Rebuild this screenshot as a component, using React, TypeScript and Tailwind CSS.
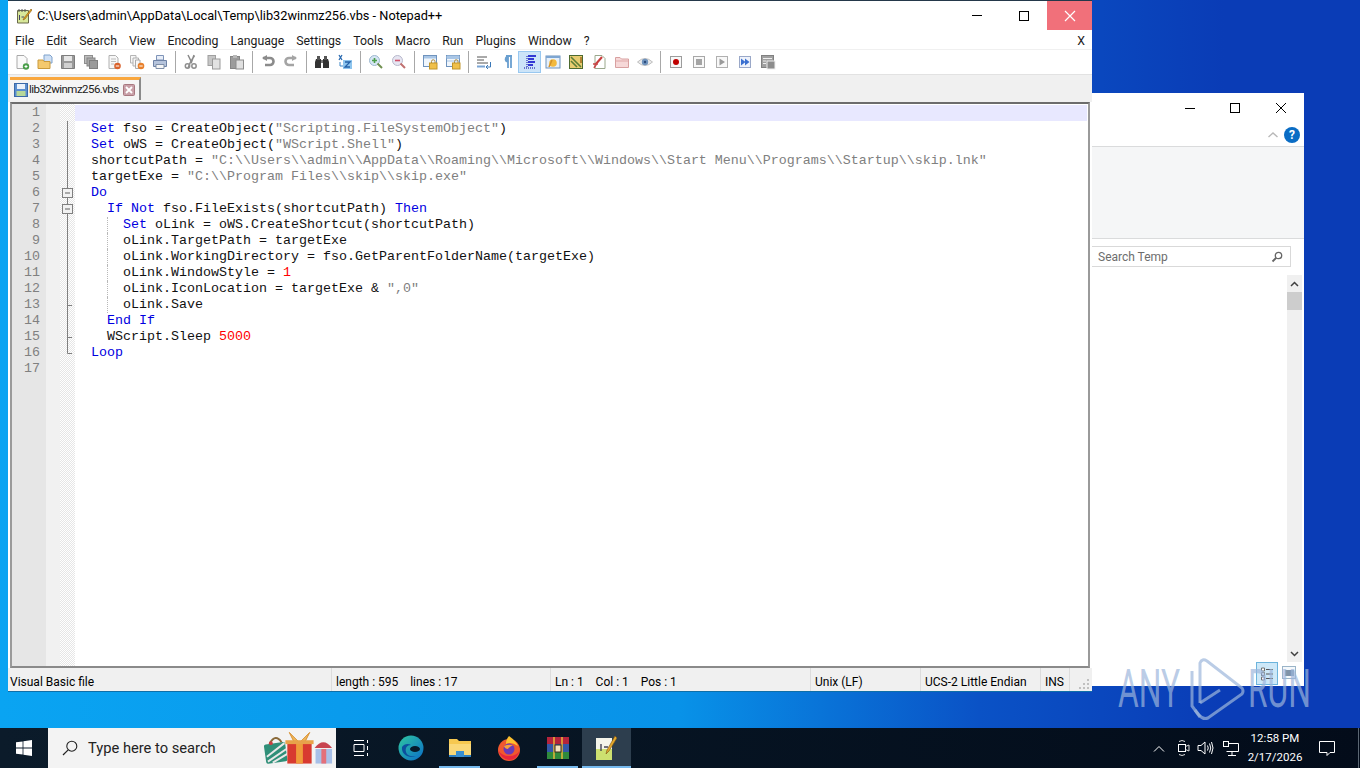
// App.tsx - Notepad++ over an Explorer window on a Windows 10 desktop
import type { ReactNode } from 'react'

type Tok = [string, 'k' | 's' | 'n' | 'p']
type Fold = 'none' | 'line' | 'box' | 'tick' | 'end'

const lines: { fold: Fold; indent: number; toks: Tok[] }[] = [
  { fold: 'none', indent: 0, toks: [] },
  { fold: 'line', indent: 0, toks: [['Set', 'k'], [' fso = CreateObject(', 'p'], ['"Scripting.FileSystemObject"', 's'], [')', 'p']] },
  { fold: 'line', indent: 0, toks: [['Set', 'k'], [' oWS = CreateObject(', 'p'], ['"WScript.Shell"', 's'], [')', 'p']] },
  { fold: 'line', indent: 0, toks: [['shortcutPath = ', 'p'], ['"C:\\\\Users\\\\admin\\\\AppData\\\\Roaming\\\\Microsoft\\\\Windows\\\\Start Menu\\\\Programs\\\\Startup\\\\skip.lnk"', 's']] },
  { fold: 'line', indent: 0, toks: [['targetExe = ', 'p'], ['"C:\\\\Program Files\\\\skip\\\\skip.exe"', 's']] },
  { fold: 'box', indent: 0, toks: [['Do', 'k']] },
  { fold: 'box', indent: 1, toks: [['If', 'k'], [' ', 'p'], ['Not', 'k'], [' fso.FileExists(shortcutPath) ', 'p'], ['Then', 'k']] },
  { fold: 'line', indent: 2, toks: [['Set', 'k'], [' oLink = oWS.CreateShortcut(shortcutPath)', 'p']] },
  { fold: 'line', indent: 2, toks: [['oLink.TargetPath = targetExe', 'p']] },
  { fold: 'line', indent: 2, toks: [['oLink.WorkingDirectory = fso.GetParentFolderName(targetExe)', 'p']] },
  { fold: 'line', indent: 2, toks: [['oLink.WindowStyle = ', 'p'], ['1', 'n']] },
  { fold: 'line', indent: 2, toks: [['oLink.IconLocation = targetExe & ', 'p'], ['",0"', 's']] },
  { fold: 'tick', indent: 2, toks: [['oLink.Save', 'p']] },
  { fold: 'line', indent: 1, toks: [['End', 'k'], [' ', 'p'], ['If', 'k']] },
  { fold: 'tick', indent: 1, toks: [['WScript.Sleep ', 'p'], ['5000', 'n']] },
  { fold: 'end', indent: 0, toks: [['Loop', 'k']] },
  { fold: 'none', indent: 0, toks: [] },
]

const tokClass = {
  k: 'text-[#0000e0]',
  s: 'text-[#808080]',
  n: 'text-[#ff0000]',
  p: 'text-[#111111]',
}

const menus = ['File', 'Edit', 'Search', 'View', 'Encoding', 'Language', 'Settings', 'Tools', 'Macro', 'Run', 'Plugins', 'Window', '?']

function FoldCell({ fold }: { fold: Fold }) {
  return (
    <svg width="14" height="16" className="block shrink-0">
      {fold === 'line' && <path d="M7.5 0V16" stroke="#808080" />}
      {fold === 'tick' && <path d="M7.5 0V16M7.5 8.5H12" stroke="#808080" />}
      {fold === 'end' && <path d="M7.5 0V8.5H12" stroke="#808080" fill="none" />}
      {fold === 'box' && (
        <>
          <path d="M7.5 0V16" stroke="#808080" />
          <rect x="2.5" y="3.5" width="10" height="9" fill="#f2f2f2" stroke="#808080" />
          <path d="M5 8H10" stroke="#606060" />
        </>
      )}
    </svg>
  )
}

function Tb({ children, active }: { children: ReactNode; active?: boolean }) {
  return (
    <div className={`flex h-[22px] w-[23px] shrink-0 items-center justify-center ${active ? 'border border-[#99c8f0] bg-[#cce4f8]' : ''}`}>
      <svg width="16" height="16" viewBox="0 0 16 16" className="block">
        {children}
      </svg>
    </div>
  )
}

function Sep() {
  return <div className="mx-[3.5px] h-[22px] w-px shrink-0 bg-[#a8a8a8]" />
}

function Toolbar() {
  return (
    <div className="flex h-[25px] shrink-0 items-center border-b border-[#e2e2e2] bg-white pl-[2px]">
      <Tb><path d="M3 1.5H10L13 4.5V14.5H3Z" fill="#fafafa" stroke="#a9a9a9" /><circle cx="12" cy="12.5" r="3.2" fill="#4a9e4a" /><path d="M10.5 12.5H13.5M12 11V14" stroke="#fff" /></Tb>
      <Tb><path d="M7 1H13L15 3V9H7Z" fill="#cfe0f5" stroke="#7fa2cc" /><path d="M1 6H6L7 7.5H13V14.5H1Z" fill="#f4c96e" stroke="#c99a3c" /></Tb>
      <Tb><path d="M1.5 1.5H14.5V14.5H1.5Z" fill="#9a9a9a" stroke="#7d7d7d" /><rect x="4" y="2" width="8" height="5" fill="#e6e6e6" /><rect x="4" y="9" width="8" height="5" fill="#d0d0d0" /></Tb>
      <Tb><rect x="1.5" y="1.5" width="8" height="8" fill="#bdbdbd" stroke="#8f8f8f" /><rect x="4" y="4" width="8" height="8" fill="#a8a8a8" stroke="#858585" /><rect x="6.5" y="6.5" width="8" height="8" fill="#9b9b9b" stroke="#808080" /></Tb>
      <Tb><path d="M3 1.5H9.5L12 4V14.5H3Z" fill="#f7f7f7" stroke="#b0b0b0" /><path d="M5 5H10M5 7.5H10M5 10H8" stroke="#bbb" /><circle cx="11.5" cy="12" r="3.3" fill="#d9622c" /><path d="M9.8 12H13.2" stroke="#fff" /></Tb>
      <Tb><path d="M1.5 1.5H7V9H1.5Z" fill="#f7f7f7" stroke="#b5b5b5" /><path d="M4 4H9.5V12H4Z" fill="#f7f7f7" stroke="#b0b0b0" /><path d="M6.5 6H11V14.5H6.5Z" fill="#f7f7f7" stroke="#aaa" /><circle cx="12" cy="12" r="3.3" fill="#e8802c" /><path d="M10.3 12H13.7" stroke="#fff" /></Tb>
      <Tb><path d="M4.5 1.5H11.5V6H4.5Z" fill="#e8eef8" stroke="#7f94b8" /><path d="M1.5 6.5H14.5V12.5H1.5Z" fill="#b6c4dc" stroke="#6f83a6" /><path d="M4 10.5H12V14.5H4Z" fill="#f6f6f6" stroke="#7f8fa8" /></Tb>
      <Sep />
      <Tb><path d="M5 1L8.5 8L11 1M11.5 1.5L7.5 8L5 14" stroke="#8a8a8a" strokeWidth="1.5" fill="none" /><circle cx="4.5" cy="12" r="2.2" fill="none" stroke="#8f8f8f" strokeWidth="1.5" /><circle cx="11" cy="12" r="2.2" fill="none" stroke="#8f8f8f" strokeWidth="1.5" /></Tb>
      <Tb><rect x="2" y="1.5" width="7.5" height="10" fill="#c6c6c6" stroke="#a0a0a0" /><rect x="6.5" y="5" width="7.5" height="10" fill="#e2e2e2" stroke="#9a9a9a" /></Tb>
      <Tb><rect x="1.5" y="2.5" width="9" height="12" fill="#9c9c9c" stroke="#858585" /><rect x="4" y="1" width="4" height="3" fill="#b8b8b8" /><rect x="7" y="6" width="7.5" height="9" fill="#e0e0e0" stroke="#8c8c8c" /></Tb>
      <Sep />
      <Tb><path d="M3 4H10A3 3 0 0 1 10 11H5" fill="none" stroke="#8b8b8b" strokeWidth="2.6" /><path d="M7 1V7L2 4Z" fill="#8b8b8b" /></Tb>
      <Tb><path d="M13 4H6A3 3 0 0 0 6 11H11" fill="none" stroke="#a4a4a4" strokeWidth="2.6" /><path d="M9 1V7L14 4Z" fill="#a4a4a4" /></Tb>
      <Sep />
      <Tb><path d="M2 5H7V14H1V8ZM9 5H14L15 8V14H9Z" fill="#333" /><rect x="3" y="2" width="3" height="4" fill="#555" /><rect x="10" y="2" width="3" height="4" fill="#555" /><rect x="7" y="6" width="2" height="3" fill="#777" /></Tb>
      <Tb><path d="M2 1L5 6M5 1L2 6" stroke="#2a6ab0" strokeWidth="1.3" /><rect x="6" y="6" width="9" height="9" fill="#8ec5ee" /><path d="M8 8H13L8 13H13" stroke="#2461a8" strokeWidth="1.3" fill="none" /><path d="M3 8V12H6" stroke="#3d86c6" fill="none" /></Tb>
      <Sep />
      <Tb><circle cx="6.5" cy="6.5" r="5" fill="#d6e6f4" stroke="#9db8d0" /><path d="M9.5 9.5L14 14" stroke="#6f8f4f" strokeWidth="2" /><path d="M4 6.5H9M6.5 4V9" stroke="#4a9e4a" strokeWidth="1.6" /></Tb>
      <Tb><circle cx="6.5" cy="6.5" r="5" fill="#e6e6f2" stroke="#b8b8cc" /><path d="M9.5 9.5L14 14" stroke="#c07070" strokeWidth="2" /><path d="M4 6.5H9" stroke="#d0506a" strokeWidth="1.6" /></Tb>
      <Sep />
      <Tb><rect x="1.5" y="1.5" width="13" height="11" fill="#f0f6fc" stroke="#6f93bd" /><path d="M2 2H14V4.5H2Z" fill="#a9c6e6" /><rect x="7.5" y="9" width="7.5" height="6" fill="#f0c04a" stroke="#c2962a" /><path d="M9.5 9V7.5A1.7 1.7 0 0 1 13 7.5V9" fill="none" stroke="#b08a3a" /></Tb>
      <Tb><rect x="1.5" y="1.5" width="13" height="11" fill="#f0f6fc" stroke="#6f93bd" /><path d="M2 2H14V4.5H2ZM2 7H14" fill="#a9c6e6" stroke="#a9c6e6" /><rect x="7.5" y="9" width="7.5" height="6" fill="#f0c04a" stroke="#c2962a" /><path d="M9.5 9V7.5A1.7 1.7 0 0 1 13 7.5V9" fill="none" stroke="#b08a3a" /></Tb>
      <Sep />
      <Tb><path d="M1 3H11M1 6H8M1 9H12" stroke="#555" /><path d="M1 12.5H9" stroke="#7aa5d4" strokeWidth="2" /><path d="M14.5 8V13H10.5M12 11L10 13L12 15" stroke="#3a78b8" fill="none" /></Tb>
      <Tb><path d="M7 2H13M9 2V14M12 2V14" stroke="#6a9fd0" strokeWidth="1.8" fill="none" /><path d="M9 2A3.2 3.2 0 0 0 9 8.5Z" fill="#6a9fd0" /></Tb>
      <Tb active><path d="M5 2V14" stroke="#0000a0" strokeDasharray="1 1" /><path d="M6 2H14M6 5H12M6 8H13M6 11H11" stroke="#0000c8" strokeWidth="1.4" /><path d="M2 14H14" stroke="#0000a0" strokeDasharray="1 1" /></Tb>
      <Tb><rect x="1" y="2" width="14" height="12" fill="#e6f0fb" stroke="#6f93bd" /><path d="M1 2H15V4H1Z" fill="#7ea6d2" /><circle cx="8" cy="9" r="3.8" fill="#f2b93e" /><path d="M4 13L7 6" stroke="#d2902a" strokeWidth="1.5" /></Tb>
      <Tb><rect x="1.5" y="1.5" width="13" height="13" fill="#e8cc70" stroke="#4d6a30" /><path d="M3 3L13 13M3 7L9 13" stroke="#5c7f38" strokeWidth="1.6" /><path d="M13 3V9" stroke="#b48432" strokeWidth="2" /></Tb>
      <Tb><path d="M4 1.5H11L14 4.5V14.5H4Z" fill="#fff" stroke="#9aa88c" /><path d="M11 3L4 11" stroke="#c83c3c" strokeWidth="2" /><path d="M2 10H7M3 14L6 9" stroke="#c84a4a" strokeWidth="1.6" /></Tb>
      <Tb><path d="M1.5 3.5H6L7.5 5H14.5V13.5H1.5Z" fill="#f6d8d8" stroke="#d8a0a0" /><path d="M2 7H14" stroke="#e0a8a8" /></Tb>
      <Tb><path d="M0.5 8Q8 1 15.5 8Q8 15 0.5 8Z" fill="#ececec" stroke="#bdbdbd" /><circle cx="8" cy="8" r="3.2" fill="#6f93bd" /><circle cx="8" cy="8" r="1.2" fill="#2a4a7a" /></Tb>
      <Sep />
      <Tb><rect x="2.5" y="2.5" width="11" height="11" fill="#f8f8f8" stroke="#9c9c9c" /><circle cx="8" cy="8" r="3" fill="#c00000" /></Tb>
      <Tb><rect x="2.5" y="2.5" width="11" height="11" fill="#f8f8f8" stroke="#a8a8a8" /><rect x="5" y="5" width="6" height="6" fill="#a4a4a4" /></Tb>
      <Tb><rect x="2.5" y="2.5" width="11" height="11" fill="#f8f8f8" stroke="#b0b0b0" /><path d="M5.5 4.5L11 8L5.5 11.5Z" fill="#9a9a9a" /></Tb>
      <Tb><rect x="2.5" y="2.5" width="11" height="11" fill="#eef2fb" stroke="#9aa8c8" /><path d="M4 4.5L8.5 8L4 11.5ZM8 4.5L12.5 8L8 11.5Z" fill="#3a6fd0" /></Tb>
      <Tb><rect x="1.5" y="1.5" width="12" height="12" fill="#a0a0a0" stroke="#808080" /><path d="M3 4.5H12M3 7H6M3 9.5H6" stroke="#eee" /><rect x="7" y="7" width="8" height="8" fill="#8c8c8c" stroke="#eee" /></Tb>
    </div>
  )
}

function Editor() {
  return (
    <div className="mx-[2px] flex min-h-0 flex-1 border-x-2 border-b-2 border-t-2 border-x-[#9a9a9a] border-b-[#8a8a8a] border-t-[#6c6c6c] bg-white">
      <div className="flex w-[63px] shrink-0">
        <div className="w-[34px] bg-[#e6e6e6]" />
        <div className="w-[14px] bg-[#f1f1f1]" />
        <div className="w-[15px] bg-[repeating-conic-gradient(#e6e6e6_0_25%,#ffffff_0_50%)] bg-[length:2px_2px]" />
      </div>
      <div className="relative min-w-0 flex-1 pt-px">
        <div className="absolute -left-[63px] top-px">
          {lines.map((l, i) => (
            <div key={i} className="flex h-4 items-center">
              <div className="w-[28px] text-right font-['Liberation_Mono'] text-[13.33px] leading-4 text-[#808080]">{i + 1}</div>
              <div className="w-[20px]" />
              <FoldCell fold={l.fold} />
            </div>
          ))}
        </div>
        <div className="font-['Liberation_Mono'] text-[13.33px] leading-4">
          {lines.map((l, i) => (
            <div key={i} className={`mr-px h-4 whitespace-pre pl-4 ${i === 0 ? 'bg-[#e8e8ff]' : ''}`}>
              {l.indent > 0 && <span className="inline-block h-4 w-4 align-top" />}
              {l.indent > 1 && <span className="inline-block h-4 w-4 border-l border-dotted border-[#b8b8b8] align-top" />}
              {l.toks.map((t, j) => (
                <span key={j} className={tokClass[t[1]]}>{t[0]}</span>
              ))}
            </div>
          ))}
        </div>
      </div>
    </div>
  )
}

function StatusCell({ w, children, last }: { w: string; children?: ReactNode; last?: boolean }) {
  return (
    <div className={`flex h-full shrink-0 items-center whitespace-pre pl-[4px] pt-[5px] ${w} ${last ? '' : 'border-r border-[#dcdcdc]'}`}>
      {children}
    </div>
  )
}

function NotepadWindow() {
  return (
    <div className="absolute left-2 top-0 flex h-[692px] w-[1084px] flex-col border-t border-b border-t-[#24384a] border-b-[#0f6fa8] bg-white font-['Roboto'] text-[12px] text-[#1a1a1a]">
      <div className="flex h-[29px] shrink-0 items-center">
        <svg width="16" height="16" viewBox="0 0 16 16" className="ml-[8px] block shrink-0">
          <path d="M1.5 2.5H12.5V15H1.5Z" fill="#d8e89a" stroke="#6a6a4a" />
          <path d="M3 1V4M6 1V4M9 1V4" stroke="#555" />
          <path d="M3.5 7V12M5.5 9H8" stroke="#446" />
          <path d="M15 1L8 10L7 12L9 11L16 2Z" fill="#e0a020" stroke="#8a5a10" strokeWidth=".6" />
        </svg>
        <div className="ml-[5px] whitespace-nowrap text-[12.75px] text-black">C:\Users\admin\AppData\Local\Temp\lib32winmz256.vbs - Notepad++</div>
        <div className="ml-auto flex h-full items-center">
          <div className="flex h-full w-[46px] items-center justify-center">
            <div className="h-px w-[10px] bg-black" />
          </div>
          <div className="flex h-full w-[47px] items-center justify-center">
            <div className="h-[10px] w-[10px] border border-black" />
          </div>
          <div className="flex h-full w-[45px] items-center justify-center bg-[#f1707a]">
            <svg width="12" height="12" viewBox="0 0 12 12" className="block">
              <path d="M1 1L11 11M11 1L1 11" stroke="#fff" strokeWidth="1.2" />
            </svg>
          </div>
        </div>
      </div>
      <div className="flex h-[20px] shrink-0 items-center gap-[12px] border-b border-[#f0f0f0] px-[7px] pt-[4px] text-[12.3px]">
        {menus.map((m) => (
          <span key={m}>{m}</span>
        ))}
        <span className="ml-auto">X</span>
      </div>
      <Toolbar />
      <div className="flex h-[27px] shrink-0 items-end bg-[#f0f0f0] pb-[2px] pl-[2px]">
        <div className="flex h-[23px] w-[131px] items-center border-r-2 border-t-[3px] border-r-[#8a8a8a] border-t-[#f9a73e] bg-[#f5f5f5] pl-[4px]">
          <svg width="14" height="14" viewBox="0 0 14 14" className="block shrink-0">
            <rect x=".5" y=".5" width="13" height="13" fill="#5b8fd0" stroke="#3c6aa8" />
            <rect x="3" y="1" width="8" height="5" fill="#eaf2fb" />
            <rect x="2.5" y="8" width="9" height="5" fill="#b8d89a" />
          </svg>
          <span className="ml-px whitespace-nowrap text-[11.5px] leading-none tracking-[-0.55px] text-[#222]">lib32winmz256.vbs</span>
          <svg width="12" height="12" viewBox="0 0 12 12" className="ml-[4px] block shrink-0">
            <rect x=".5" y=".5" width="11" height="11" rx="1" fill="#c9a0a8" stroke="#a87880" />
            <path d="M3 3L9 9M9 3L3 9" stroke="#fff" strokeWidth="1.8" />
          </svg>
        </div>
      </div>
      <Editor />
      <div className="flex h-[23px] shrink-0 items-center bg-[#f0f0f0] pl-[2px] text-[12px] text-black">
        <StatusCell w="w-[326px] -ml-[4px]">Visual Basic file</StatusCell>
        <StatusCell w="w-[219px]">length : 595    lines : 17</StatusCell>
        <StatusCell w="w-[260px]">Ln : 1    Col : 1    Pos : 1</StatusCell>
        <StatusCell w="w-[110px]">Unix (LF)</StatusCell>
        <StatusCell w="w-[120px]">UCS-2 Little Endian</StatusCell>
        <StatusCell w="w-[29px]">INS</StatusCell>
        <div className="mb-[2px] ml-auto mr-[2px] mt-auto">
          <svg width="12" height="12" viewBox="0 0 12 12" className="block">
            <path d="M9 2H11V4H9ZM5 6H7V8H5ZM9 6H11V8H9ZM1 10H3V12H1ZM5 10H7V12H5ZM9 10H11V12H9Z" fill="#c0c0c0" />
          </svg>
        </div>
      </div>
    </div>
  )
}

function ExplorerWindow() {
  return (
    <div className="absolute left-[1092px] top-[93px] flex h-[593px] w-[212px] flex-col bg-white font-['Roboto'] text-[12px]">
      <div className="flex h-[30px] shrink-0 items-center justify-end">
        <div className="flex w-[45px] justify-center"><div className="h-px w-[10px] bg-black" /></div>
        <div className="flex w-[46px] justify-center"><div className="h-[10px] w-[10px] border border-black" /></div>
        <div className="flex w-[46px] justify-center">
          <svg width="12" height="12" viewBox="0 0 12 12" className="block"><path d="M1 1L11 11M11 1L1 11" stroke="#000" /></svg>
        </div>
      </div>
      <div className="flex h-[24px] shrink-0 items-center justify-end border-b border-[#dadbdc] pr-[4px]">
        <svg width="12" height="8" viewBox="0 0 12 8" className="mr-[5px] block"><path d="M1.5 6L6 2L10.5 6" fill="none" stroke="#b8b8b8" strokeWidth="1.4" /></svg>
        <div className="flex h-4 w-4 items-center justify-center rounded-full bg-[#0a6cc4] text-[12px] font-bold leading-none text-white">?</div>
      </div>
      <div className="h-[92px] shrink-0 border-b border-[#dadbdc] bg-[#f5f6f7]" />
      <div className="mt-[7px] flex h-[21px] w-[199px] shrink-0 items-center justify-between border border-l-0 border-[#d9d9d9] pl-[6px] pr-[7px] text-[#6d6d6d]">
        <span>Search Temp</span>
        <svg width="12" height="12" viewBox="0 0 12 12" className="block">
          <circle cx="7.5" cy="4.5" r="3.2" fill="none" stroke="#666" strokeWidth="1.3" />
          <path d="M5 7L1.5 10.5" stroke="#666" strokeWidth="1.8" />
        </svg>
      </div>
      <div className="flex min-h-0 flex-1 justify-end pr-[2px] pt-[8px]">
        <div className="flex h-[387px] w-[15px] flex-col bg-[#f0f0f0]">
          <div className="flex h-[17px] items-center justify-center">
            <svg width="9" height="6" viewBox="0 0 9 6" className="block"><path d="M1 5L4.5 1.5L8 5" fill="none" stroke="#404040" strokeWidth="1.5" /></svg>
          </div>
          <div className="h-[18px] bg-[#cdcdcd]" />
          <div className="mt-auto flex h-[17px] items-center justify-center">
            <svg width="9" height="6" viewBox="0 0 9 6" className="block"><path d="M1 1L4.5 4.5L8 1" fill="none" stroke="#404040" strokeWidth="1.5" /></svg>
          </div>
        </div>
      </div>
      <div className="flex h-[24px] shrink-0 items-start justify-end pr-[8px]">
        <div className="flex h-[23px] w-[22px] items-center justify-center border border-[#6cb4dc] bg-[#cde8f8]">
          <svg width="14" height="15" viewBox="0 0 14 15" className="block"><path d="M1.5 2H4.5V5H1.5ZM1.5 6.5H4.5V9.5H1.5ZM1.5 11H4.5V14H1.5Z" fill="#fff" stroke="#707070" /><path d="M6 3.5H13M6 8H13M6 12.5H13" stroke="#555" /></svg>
        </div>
        <div className="ml-[4px] mt-[4px] flex h-[13px] w-[14px] items-center justify-center border border-[#9ab4c8] bg-[#f4f8fb]">
          <div className="h-[6px] w-[9px] bg-[#7f93a8]" />
        </div>
      </div>
    </div>
  )
}

function Watermark() {
  return (
    <div className="pointer-events-none absolute left-[1118px] top-[657px] flex h-[64px] w-[192px] items-center text-[#9db6dc]/70">
      <span className="w-[60px] shrink-0 origin-left scale-x-[0.6] whitespace-nowrap font-['Roboto'] text-[53px] font-normal leading-none">ANY</span>
      <svg width="60" height="64" viewBox="0 0 60 64" className="ml-[8px] block shrink-0">
        <path d="M14 46V6Q16 1 21 4L56 31Q58 34 56 37L22 61Q17 63 13 58L9 53" fill="none" stroke="currentColor" strokeWidth="3" />
        <path d="M14 46L34 33" fill="none" stroke="currentColor" strokeWidth="3" />
        <path d="M6 14V49L14 60" fill="none" stroke="currentColor" strokeWidth="3" />
      </svg>
      <span className="ml-[2px] w-[60px] shrink-0 origin-left scale-x-[0.6] whitespace-nowrap font-['Roboto'] text-[53px] font-normal leading-none">RUN</span>
    </div>
  )
}

function GiftIcon() {
  return (
    <svg width="70" height="34" viewBox="0 0 72 34" className="block">
      <rect x="1" y="12" width="22" height="20" rx="2" fill="#2f8f78" transform="rotate(-8 12 22)" />
      <path d="M3 26L21 12M4 31L23 18M9 32L24 23" stroke="#e8e8e8" strokeWidth="2" />
      <path d="M6 12Q12 2 18 11" fill="none" stroke="#8a6a3a" strokeWidth="2" />
      <circle cx="7" cy="12" r="2" fill="#c84040" />
      <rect x="24" y="11" width="25" height="22" fill="#d83a30" />
      <rect x="33" y="11" width="7" height="22" fill="#f09a3a" />
      <path d="M36 11L26 1L31 11ZM37 11L47 1L42 11Z" fill="#eeb65a" stroke="#d89030" />
      <rect x="22" y="9" width="29" height="4" fill="#e8a24a" />
      <rect x="53" y="18" width="17" height="15" fill="#a8c0e8" />
      <rect x="59" y="18" width="5" height="15" fill="#e4707a" />
      <path d="M52 17Q61 5 70 17Z" fill="#c84450" />
    </svg>
  )
}

function TaskIcon({ active, line, children }: { active?: boolean; line?: boolean; children: ReactNode }) {
  return (
    <div className={`relative flex h-full w-[49px] shrink-0 items-center justify-center ${active ? 'bg-[#2d3e4e]' : ''}`}>
      {children}
      {line && <div className={`absolute bottom-0 h-[2px] bg-[#76b9ed] ${active ? 'left-0 right-0' : 'left-[4px] right-[4px]'}`} />}
    </div>
  )
}

function Taskbar() {
  return (
    <div className="absolute bottom-0 left-0 right-0 flex h-10 items-center bg-gradient-to-r from-[#0b1b2a] to-[#030c1a] font-['Roboto'] text-white">
      <div className="flex h-full w-12 shrink-0 items-center justify-center">
        <svg width="16" height="16" viewBox="0 0 16 16" className="block">
          <path d="M0 2.3L6.6 1.4V7.6H0ZM7.4 1.3L16 0V7.6H7.4ZM0 8.4H6.6V14.6L0 13.7ZM7.4 8.4H16V16L7.4 14.7Z" fill="#fff" />
        </svg>
      </div>
      <div className="flex h-full w-[288px] shrink-0 items-center bg-[#f3f3f3] text-[#222]">
        <svg width="16" height="16" viewBox="0 0 16 16" className="ml-[14px] block shrink-0">
          <circle cx="9.8" cy="6.2" r="5" fill="none" stroke="#222" strokeWidth="1.1" />
          <path d="M6.2 9.8L1 15" stroke="#222" strokeWidth="1.2" />
        </svg>
        <span className="ml-[10px] whitespace-nowrap text-[14.7px]">Type here to search</span>
        <div className="ml-auto mr-[2px] shrink-0"><GiftIcon /></div>
      </div>
      <div className="flex h-full w-[50px] shrink-0 items-center justify-center">
        <svg width="18" height="16" viewBox="0 0 18 16" className="block">
          <path d="M2 0.5H12M2 15.5H12M2 4.5H12V11.5H2ZM15.5 0V3M15.5 6V10M15.5 13V16" fill="none" stroke="#fff" />
        </svg>
      </div>
      <div className="flex h-full items-center">
        <TaskIcon>
          <svg width="26" height="26" viewBox="0 0 26 26" className="block">
            <defs>
              <linearGradient id="edge" x1="0" y1="0" x2="1" y2="1">
                <stop offset="0" stopColor="#2fc7a0" />
                <stop offset="1" stopColor="#0a6cc8" />
              </linearGradient>
            </defs>
            <circle cx="13" cy="13" r="12.5" fill="url(#edge)" />
            <path d="M13 10C9 10 7 13 8 17C9 21 14 22 18 21C12 24 3 20 4 12C6 9 10 8 13 10Z" fill="#0c4f9e" />
            <ellipse cx="17" cy="14" rx="5" ry="3" fill="#061a2a" />
          </svg>
        </TaskIcon>
        <TaskIcon line>
          <svg width="24" height="22" viewBox="0 0 24 22" className="block">
            <path d="M1 2H9L11 4H23V20H1Z" fill="#f6c850" />
            <rect x="1" y="7" width="22" height="13" fill="#fad878" />
            <rect x="8" y="14" width="8" height="6" fill="#3a8fd0" />
            <rect x="1" y="18" width="7" height="2" fill="#2e7fc0" />
            <rect x="16" y="18" width="7" height="2" fill="#2e7fc0" />
          </svg>
        </TaskIcon>
        <TaskIcon>
          <svg width="24" height="26" viewBox="0 0 24 26" className="block">
            <circle cx="12" cy="15" r="11" fill="#f0582e" />
            <path d="M12 1Q19 6 21 11Q14 6 9 9Q9 4 12 1Z" fill="#fcc02e" />
            <path d="M1 15Q4 24 12 25Q20 25 23 15Q20 21 12 21Q5 21 1 15Z" fill="#e8263c" />
            <circle cx="12" cy="14" r="5.5" fill="#6a3ab8" />
            <path d="M7 11Q11 9 16 10Q12 12 11 14Q8 14 7 11Z" fill="#f7a13a" />
          </svg>
        </TaskIcon>
        <TaskIcon line>
          <svg width="24" height="24" viewBox="0 0 24 24" className="block">
            <rect x="1" y="1" width="22" height="7" fill="#b4243c" />
            <rect x="1" y="8" width="22" height="8" fill="#3458a8" />
            <rect x="1" y="16" width="22" height="7" fill="#2f8a3c" />
            <path d="M8 1V23M16 1V23" stroke="#e8b838" strokeWidth="1.5" />
            <rect x="9" y="9" width="6" height="7" fill="#f4e4c0" stroke="#3a2a18" />
          </svg>
        </TaskIcon>
        <TaskIcon active line>
          <svg width="24" height="26" viewBox="0 0 24 26" className="-ml-[3px] block">
            <path d="M3 3H19V25H3Z" fill="#cde070" />
            <path d="M3 3H19V14H3Z" fill="#f4f4ea" />
            <path d="M8 9V16M11 12H15" stroke="#445" strokeWidth="1.4" />
            <path d="M22 1L14 15L13 19L16 16L24 3Z" fill="#e4a82c" stroke="#7a5010" strokeWidth=".6" />
          </svg>
        </TaskIcon>
      </div>
      <div className="ml-auto flex h-full items-center">
        <svg width="12" height="7" viewBox="0 0 12 7" className="block"><path d="M1 6.5L6 1.5L11 6.5" fill="none" stroke="#fff" /></svg>
        <svg width="14" height="18" viewBox="0 0 14 18" className="ml-[11px] block">
          <rect x="2.5" y="5.5" width="7" height="7" fill="none" stroke="#fff" />
          <path d="M9.5 7.5L13 6V12L9.5 10.5M3 2.5Q6 .5 9 2.5M3 15.5Q6 17.5 9 15.5" fill="none" stroke="#ddd" />
        </svg>
        <svg width="18" height="16" viewBox="0 0 18 16" className="ml-[7px] block">
          <path d="M1 5.5H4L8 2V14L4 10.5H1Z" fill="none" stroke="#fff" />
          <path d="M10.5 5.5Q12 8 10.5 10.5M12.5 3.5Q15 8 12.5 12.5M14.5 2Q17.5 8 14.5 14" fill="none" stroke="#fff" />
        </svg>
        <svg width="18" height="16" viewBox="0 0 18 16" className="ml-[7px] block">
          <path d="M4.5 3.5H16.5V11.5H4.5M10 11.5V15M6 15.5H14" fill="none" stroke="#fff" />
          <rect x="1.5" y="1.5" width="5" height="5" fill="#0a1420" stroke="#fff" />
        </svg>
        <div className="flex w-[70px] flex-col items-center text-[11.5px] leading-[19px]">
          <span>12:58 PM</span>
          <span>2/17/2026</span>
        </div>
        <svg width="18" height="17" viewBox="0 0 18 17" className="ml-[8px] block">
          <path d="M1.5 1.5H16.5V12.5H12L9 15.5V12.5H1.5Z" fill="none" stroke="#fff" />
        </svg>
        <div className="ml-[22px] h-full w-[2px] border-l border-[#5a6672]" />
      </div>
    </div>
  )
}

export default function App() {
  return (
    <div className="relative h-[768px] w-[1360px] overflow-hidden bg-[linear-gradient(90deg,#0aa4f2_0%,#0892e8_50%,#0a52c6_72%,#0a3cb6_90%)]">
      <ExplorerWindow />
      <NotepadWindow />
      <Watermark />
      <Taskbar />
    </div>
  )
}
